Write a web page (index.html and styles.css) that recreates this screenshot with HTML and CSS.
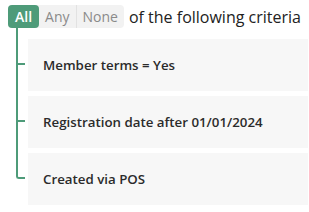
FILE: index.html
```html
<!DOCTYPE html>
<html lang="en">

<head>
    <meta charset="UTF-8">
    <meta name="viewport" content="width=device-width, initial-scale=1.0">
    <title>Criteria</title>
    <link rel="stylesheet" href="styles.css">
</head>

<body>

    <div class="criteria">
        <div class="match-row">
            <div class="match-toggle">
                <button class="active">All</button>
                <button>Any</button>
                <button>None</button>
            </div>
            <span class="match-label">of the following criteria</span>
        </div>
        <ul class="tree">
            <li><div class="rule">Member terms = Yes</div></li>
            <li><div class="rule">Registration date after 01/01/2024</div></li>
            <li><div class="rule">Created via POS</div></li>
        </ul>
    </div>

</body>

</html>
```

FILE: styles.css
```css
body {
    font-family: 'Open Sans', 'Noto Sans', sans-serif;
    margin: 0;
    background-color: #fff;
    color: #222;
}

.criteria {
    padding: 5px 0 0 8px;
}

.match-row {
    display: flex;
    align-items: center;
}

.match-toggle {
    display: flex;
    background-color: #f2f2f2;
    border-radius: 4px;
    height: 23px;
}

.match-toggle button {
    border: none;
    background: none;
    font-family: inherit;
    font-size: 14px;
    color: #8a8a8a;
    padding: 0 6px;
    border-left: 1px solid #e2e2e2;
    cursor: pointer;
}

.match-toggle button:first-child {
    border-left: none;
}

.match-toggle .active {
    background-color: #4e9b79;
    color: #fff;
    font-weight: 600;
    border-radius: 4px;
    padding: 0 7px;
}

.match-toggle .active + button {
    border-left: none;
}

.match-label {
    margin-left: 5px;
    font-size: 16px;
}

/* tree of rules with connector lines */
.tree {
    list-style: none;
    margin: 0 0 0 8px;
    padding: 11px 1px 0 12px;
    display: flex;
    flex-direction: column;
    gap: 5px;
}

.tree li {
    position: relative;
}

.tree li::before {
    content: '';
    position: absolute;
    left: -12px;
    top: -5px;
    bottom: 0;
    border-left: 2px solid #4e9b79;
}

.tree li:first-child::before {
    top: -11px;
}

.tree li::after {
    content: '';
    position: absolute;
    left: -12px;
    top: 50%;
    width: 9px;
    border-top: 2px solid #4e9b79;
    margin-top: -2px;
}

.tree li:last-child::before {
    bottom: 50%;
    width: 7px;
    border-bottom: 2px solid #4e9b79;
    border-bottom-left-radius: 3px;
}

.tree li:last-child::after {
    display: none;
}

.rule {
    background-color: #f7f7f7;
    height: 52px;
    display: flex;
    align-items: center;
    padding-left: 15px;
    font-size: 13.3px;
    font-weight: 600;
    color: #2b2b2b;
}
```
